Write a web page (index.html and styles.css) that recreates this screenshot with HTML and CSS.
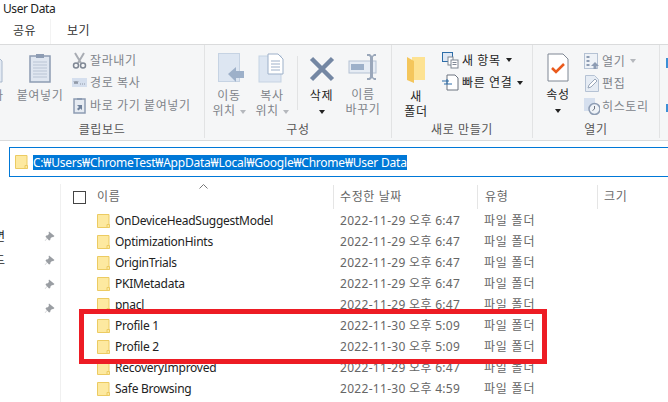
FILE: index.html
```html
<!DOCTYPE html>
<html lang="ko">
<head>
<meta charset="utf-8">
<title>User Data</title>
<link rel="stylesheet" href="styles.css">
</head>
<body>
<svg class="defs" width="0" height="0" aria-hidden="true">
  <symbol id="folder" viewBox="0 0 13 14">
    <path d="M.5.5h11.500v13H.5z" fill="#fde9a0" stroke="#eccb62"/>
    <path d="M10 13.500v-3h2.500v3z" fill="#fde9a0" stroke="#eccb62"/>
  </symbol>
  <symbol id="pin" viewBox="0 0 12 12">
    <path d="M5 1.500 10.500 6 9 7.300 8 7 6.300 8.700 6.300 10 5 10.500 3.200 8.600 1 11 .8 10.800 3 8.300 1.500 6.800 2.200 5.600 3.300 5.600 5 4 4.600 2.800z" fill="#9a9ea3"/>
  </symbol>
</svg>
<div class="window">
  <div class="title">User Data</div>
  <div class="tabs">
    <span class="tab tab-share">공유</span>
    <span class="tab tab-view">보기</span>
  </div>
  <div class="ribbon">
    <section class="group group-clip">
      <div class="tools">
        <div class="big big-copy dim">
          <svg width="24" height="30" viewBox="0 0 24 30"><path d="M1 1h14l7 7v21H1z" fill="#e3eaf3" stroke="#a9b8cc"/><path d="M5 12h13M5 16h13M5 20h13" stroke="#a9b8cc"/></svg>
          <span class="big-text">복사</span>
        </div>
        <div class="big big-paste dim">
          <svg width="22" height="30" viewBox="0 0 22 30"><rect x="1" y="3" width="20" height="26" fill="#dfe6f0" stroke="#8d9cb3" stroke-width="1.500"/><rect x="7" y="1" width="8" height="4" fill="#8d9cb3"/><path d="M4 9h14M4 12h14M4 15h14M4 18h14M4 21h14M4 24h14" stroke="#b9c4d4"/></svg>
          <span class="big-text">붙여넣기</span>
        </div>
        <div class="smalls smalls-clip dim">
          <div class="small">
            <svg class="small-ic" width="15" height="17" viewBox="0 0 15 17"><path d="M3 1 9 11M12 1 6 11" stroke="#a8acb3" stroke-width="2"/><circle cx="4" cy="13.500" r="2.500" fill="none" stroke="#7f8794" stroke-width="1.500"/><circle cx="11" cy="13.500" r="2.500" fill="none" stroke="#7f8794" stroke-width="1.500"/></svg>
            <span>잘라내기</span>
          </div>
          <div class="small">
            <svg class="small-ic" width="15" height="17" viewBox="0 0 15 17"><rect y="4" width="15" height="9" fill="#d5dfee"/><path d="M2 7l1 3 1-3 1 3 1-3M8 10h1M10 10h1M12 10h1" stroke="#7f8794" fill="none" stroke-width=".8"/></svg>
            <span class="wide">경로 복사</span>
          </div>
          <div class="small">
            <svg class="small-ic" width="15" height="17" viewBox="0 0 15 17"><rect x="2" y="2" width="11" height="14" fill="#e6ebf2" stroke="#8d9cb3" stroke-width="1.500"/><rect x="5" y="1" width="5" height="2" fill="#8d9cb3"/><path d="M5 8h5v5l-1.500-1.500-2 2-1.500-1.500 2-2z" fill="#6f819b"/></svg>
            <span class="wide">바로 가기 붙여넣기</span>
          </div>
        </div>
      </div>
      <div class="group-label">클립보드</div>
    </section>
    <section class="group group-org">
      <div class="tools">
        <div class="big big-move dim">
          <svg width="27" height="30" viewBox="0 0 27 30"><rect x=".5" y=".5" width="21" height="28" fill="#dde6f2" stroke="#c6d3e3"/><path d="M10 21 18 14v4h8v7h-8v4z" fill="#9db0c9"/></svg>
          <span class="big-text">이동<br>위치 <i class="caret caret-dim"></i></span>
        </div>
        <div class="big big-copyto dim">
          <svg width="28" height="30" viewBox="0 0 28 30"><rect x="1" y="3" width="22" height="26" fill="#dde6f2" stroke="#c6d3e3"/><path d="M10 1h10l5 5v15H10z" fill="#fff" stroke="#9db0c9"/><path d="M13 8h9M13 11h9M13 14h9M13 17h9" stroke="#9db0c9"/></svg>
          <span class="big-text">복사<br>위치 <i class="caret caret-dim"></i></span>
        </div>
        <div class="vsep"></div>
        <div class="big big-del">
          <svg width="26" height="26" viewBox="0 0 26 26"><path d="M2.500 2.500l21 21M23.500 2.500l-21 21" stroke="#7487a3" stroke-width="4.500"/></svg>
          <span class="big-text">삭제<br><i class="caret"></i></span>
        </div>
        <div class="big big-rename dim">
          <svg width="30" height="28" viewBox="0 0 30 28"><rect x="1" y="8" width="27" height="12" fill="#e6ecf4" stroke="#b5c2d4"/><rect x="3" y="11" width="13" height="6" fill="#9db0c9"/><path d="M19 1h3l2 2 2-2h2v2h-2l-1 1v20l1 1h2v2h-2l-2-2-2 2h-3v-2h2l1-1V4l-1-1h-2z" fill="#9aa7ba"/></svg>
          <span class="big-text">이름<br>바꾸기</span>
        </div>
      </div>
      <div class="group-label">구성</div>
    </section>
    <section class="group group-new">
      <div class="tools">
        <div class="big big-folder">
          <svg width="20" height="28" viewBox="0 0 20 28"><path d="M6 1h13v23H6z" fill="#fde292"/><path d="M1 1l7 4v22l-7-3z" fill="#f4c65c"/></svg>
          <span class="big-text">새<br>폴더</span>
        </div>
        <div class="smalls smalls-new">
          <div class="small">
            <svg class="small-ic" width="17" height="17" viewBox="0 0 17 17"><rect x=".5" y=".5" width="10" height="9" fill="#dfe8f4" stroke="#2d6da8"/><rect x="6" y="5" width="5" height="8" fill="#fff" stroke="#7f8794"/><rect x="9" y="8" width="7" height="8" fill="#fff" stroke="#7f8794"/><path d="M10.500 10.500h4M10.500 12.500h4" stroke="#7f8794"/></svg>
            <span class="wide">새 항목</span><i class="caret"></i>
          </div>
          <div class="small">
            <svg class="small-ic" width="17" height="17" viewBox="0 0 17 17"><path d="M5 1h8l3 3v12H5z" fill="#fff" stroke="#6d7480"/><path d="M0 7h7M2 10h8M5 5v5" stroke="#2d6da8" fill="none"/></svg>
            <span class="wide">빠른 연결</span><i class="caret"></i>
          </div>
        </div>
      </div>
      <div class="group-label">새로 만들기</div>
    </section>
    <section class="group group-open">
      <div class="tools">
        <div class="big big-prop">
          <svg width="22" height="29" viewBox="0 0 22 29"><path d="M1 1h15l5 5v22H1z" fill="#fff" stroke="#7f8794"/><path d="M5 15l4 4 8-8" fill="none" stroke="#ea5a1c" stroke-width="2.500"/></svg>
          <span class="big-text">속성<br><i class="caret"></i></span>
        </div>
        <div class="smalls smalls-open dim">
          <div class="small">
            <svg class="small-ic" width="16" height="17" viewBox="0 0 16 17"><rect x=".5" y=".5" width="13" height="15" fill="#eef2f7" stroke="#b5c2d4"/><path d="M2.500 3h3v2h-3zM2.500 7h3v2h-3zM2.500 11h3v2h-3z" fill="#8d9cb3"/><path d="M11 9l4 4h-2.500v3h-3v-3H7z" fill="#8d9cb3"/></svg>
            <span>열기</span><i class="caret caret-dim"></i>
          </div>
          <div class="small">
            <svg class="small-ic" width="16" height="17" viewBox="0 0 16 17"><path d="M1.500.500h9l4 4v12h-13z" fill="#e6ecf4" stroke="#b5c2d4"/><path d="M4 13l1-3 6-6 2 2-6 6z" fill="#fff" stroke="#9aa7ba"/></svg>
            <span>편집</span>
          </div>
          <div class="small">
            <svg class="small-ic" width="16" height="17" viewBox="0 0 16 17"><rect width="11" height="13" fill="#d5dfee"/><circle cx="10.500" cy="11" r="5.500" fill="#eef2f7" stroke="#8d9cb3" stroke-width="1.500"/><path d="M10.500 8v3l-2 1.500" fill="none" stroke="#6d7480"/></svg>
            <span>히스토리</span>
          </div>
        </div>
      </div>
      <div class="group-label">열기</div>
    </section>
    <div class="ribbon-end">
      <span class="edge-mark edge-top"></span>
      <span class="edge-mark edge-bottom"></span>
    </div>
  </div>
  <div class="address">
    <svg class="address-ic" width="13" height="16"><use href="#folder"/></svg>
    <span class="path">C:₩Users₩ChromeTest₩AppData₩Local₩Google₩Chrome₩User Data</span>
  </div>
  <div class="main">
    <aside class="nav">
      <div class="nav-row"><span class="nav-text">면</span><svg width="12" height="12"><use href="#pin"/></svg></div>
      <div class="nav-row"><span class="nav-text">드</span><svg width="12" height="12"><use href="#pin"/></svg></div>
      <div class="nav-row"><span class="nav-text"></span><svg width="12" height="12"><use href="#pin"/></svg></div>
      <div class="nav-row"><span class="nav-text"></span><svg width="12" height="12"><use href="#pin"/></svg></div>
    </aside>
    <div class="files">
      <svg class="sort" width="9" height="5" viewBox="0 0 9 5"><path d="M.5 4.500l4-4 4 4" fill="none" stroke="#777"/></svg>
      <div class="header">
        <span class="check"></span>
        <span class="col col-name">이름</span>
        <span class="col col-date">수정한 날짜</span>
        <span class="col col-type">유형</span>
        <span class="col col-size">크기</span>
      </div>
      <div class="rows">
        <div class="row"><svg width="13" height="14"><use href="#folder"/></svg><span class="name">OnDeviceHeadSuggestModel</span><span class="date">2022-11-29 오후 6:47</span><span class="type">파일 폴더</span></div>
        <div class="row"><svg width="13" height="14"><use href="#folder"/></svg><span class="name">OptimizationHints</span><span class="date">2022-11-29 오후 6:47</span><span class="type">파일 폴더</span></div>
        <div class="row"><svg width="13" height="14"><use href="#folder"/></svg><span class="name">OriginTrials</span><span class="date">2022-11-29 오후 6:47</span><span class="type">파일 폴더</span></div>
        <div class="row"><svg width="13" height="14"><use href="#folder"/></svg><span class="name">PKIMetadata</span><span class="date">2022-11-29 오후 6:47</span><span class="type">파일 폴더</span></div>
        <div class="row"><svg width="13" height="14"><use href="#folder"/></svg><span class="name">pnacl</span><span class="date">2022-11-29 오후 6:47</span><span class="type">파일 폴더</span></div>
        <div class="row"><svg width="13" height="14"><use href="#folder"/></svg><span class="name">Profile 1</span><span class="date">2022-11-30 오후 5:09</span><span class="type">파일 폴더</span></div>
        <div class="row"><svg width="13" height="14"><use href="#folder"/></svg><span class="name">Profile 2</span><span class="date">2022-11-30 오후 5:09</span><span class="type">파일 폴더</span></div>
        <div class="row"><svg width="13" height="14"><use href="#folder"/></svg><span class="name">RecoveryImproved</span><span class="date">2022-11-29 오후 6:47</span><span class="type">파일 폴더</span></div>
        <div class="row"><svg width="13" height="14"><use href="#folder"/></svg><span class="name">Safe Browsing</span><span class="date">2022-11-30 오후 4:59</span><span class="type">파일 폴더</span></div>
        <div class="row"><svg width="13" height="14"><use href="#folder"/></svg></div>
      </div>
      <div class="highlight"></div>
    </div>
  </div>
</div>
</body>
</html>
```

FILE: styles.css
```css
* { box-sizing: border-box; }
html, body { margin: 0; height: 100%; overflow: hidden; background: #fff; }
body { font: 12px/15px "Noto Sans", "Noto Sans CJK KR", sans-serif; color: #1e1e1e; }
.defs { position: absolute; }
svg { display: block; flex: none; }
.window { width: 668px; height: 402px; display: flex; flex-direction: column; overflow: hidden; }

.title { height: 19px; padding: 1px 0 0 3px; line-height: 16px; color: #222; letter-spacing: -.4px; }
.tabs { height: 25px; display: flex; line-height: 24px; color: #333; letter-spacing: .5px; }
.tab-share { width: 51px; padding-left: 13px; border-right: 1px solid #f3f3f3; }
.tab-view { padding-left: 16px; }

.ribbon { height: 97px; display: flex; background: #f5f6f7; border-top: 1px solid #dadbdc; border-bottom: 1px solid #dadbdc; }
.group { display: flex; flex-direction: column; border-right: 1px solid #e2e3e4; margin-bottom: 2px; }
.group-clip { width: 205px; }
.group-org { width: 187px; }
.group-new { width: 141px; }
.group-open { width: 127px; }
.ribbon-end { flex: 1; display: flex; flex-direction: column; align-items: flex-end; padding-top: 13px; }
.edge-mark { display: block; width: 2px; background: #3c8fd6; }
.edge-top { height: 10px; margin-bottom: 36px; }
.edge-bottom { height: 8px; }
.tools { flex: 1; display: flex; padding-top: 8px; min-height: 0; }
.group-label { height: 15px; text-align: center; color: #555; line-height: 14px; letter-spacing: .6px; }
.dim { color: #80848a; }

.big { display: flex; flex-direction: column; align-items: center; text-align: center; flex: none; }
.big-text { display: block; line-height: 15px; margin-top: 5px; white-space: nowrap; letter-spacing: .6px; }
.big-copy { width: 46px; margin-left: -31px; margin-right: 2px; }
.big-paste { width: 46px; }
.smalls { display: flex; flex-direction: column; margin-top: -4px; }
.small { display: flex; align-items: center; height: 22.500px; white-space: nowrap; letter-spacing: .6px; }
.small-ic { margin-right: 3px; }
.smalls-clip { margin-left: 9px; }
.big-move { width: 42px; margin-left: 3px; }
.big-move svg { margin-left: 5px; }
.big-copyto { width: 44px; }
.vsep { width: 1px; height: 54px; background: #e2e3e4; margin: 3px 0 0 3px; }
.big-del { width: 47px; }
.big-del svg { margin-top: 3px; }
.big-del .big-text { margin-top: 6px; }
.big-rename { width: 36px; }
.big-rename .big-text { margin-top: 6px; }
.big-folder { width: 48px; }
.big-folder svg { margin-top: 3px; }
.smalls-new { margin-left: 2px; }
.big-prop { width: 44px; margin-left: 3px; }
.smalls-open { margin-left: 4px; margin-top: -3px; }
.smalls-open .small-ic { margin-right: 2px; }
.caret { display: inline-block; width: 0; height: 0; border: 3.500px solid transparent; border-top: 4px solid #222; border-bottom: 0; margin-left: 5px; vertical-align: middle; }
.big-text br + .caret { margin-left: 0; }
.caret-dim { border-top-color: #b5b8bd; }

.address { height: 30px; margin: 6px 0 0 9px; display: flex; align-items: center; padding-left: 5px; border: 1px solid #0078d7; border-right: 0; }
.address-ic { margin-right: 5px; }
.path { background: #0078d7; color: #fff; white-space: nowrap; line-height: 15px; letter-spacing: -.22px; }

.main { flex: 1; display: flex; min-height: 0; }
.nav { width: 61px; flex: none; border-right: 1px solid #f0f0f0; padding-top: 40px; margin-top: 7px; }
.nav-row { height: 24px; display: flex; align-items: center; justify-content: space-between; padding-right: 4px; }
.nav-text { margin-left: -6px; }
.files { flex: 1; position: relative; min-width: 0; }
.sort { position: absolute; left: 138px; top: 7px; }
.header { height: 33px; display: flex; align-items: center; padding-top: 7px; color: #666; letter-spacing: .6px; }
.check { width: 13px; height: 13px; border: 1px solid #444; margin-left: 12px; flex: none; }
.col { display: block; height: 24px; line-height: 24px; }
.col-name { width: 236px; margin-left: 11px; }
.col-date { width: 144px; padding-left: 6px; border-left: 1px solid #e5e5e5; }
.col-type { width: 120px; padding-left: 7px; border-left: 1px solid #e5e5e5; }
.col-size { padding-left: 6px; border-left: 1px solid #e5e5e5; }
.rows { display: flex; flex-direction: column; }
.row { height: 21px; flex: none; display: flex; align-items: center; padding-left: 36px; white-space: nowrap; }
.name { width: 225px; margin-left: 5px; color: #222; letter-spacing: -.27px; }
.date { width: 144px; color: #666; letter-spacing: .3px; }
.type { color: #666; letter-spacing: .8px; }
.highlight { position: absolute; left: 18px; top: 132px; width: 468px; height: 55px; border: 5px solid #ed1c24; pointer-events: none; }
```
